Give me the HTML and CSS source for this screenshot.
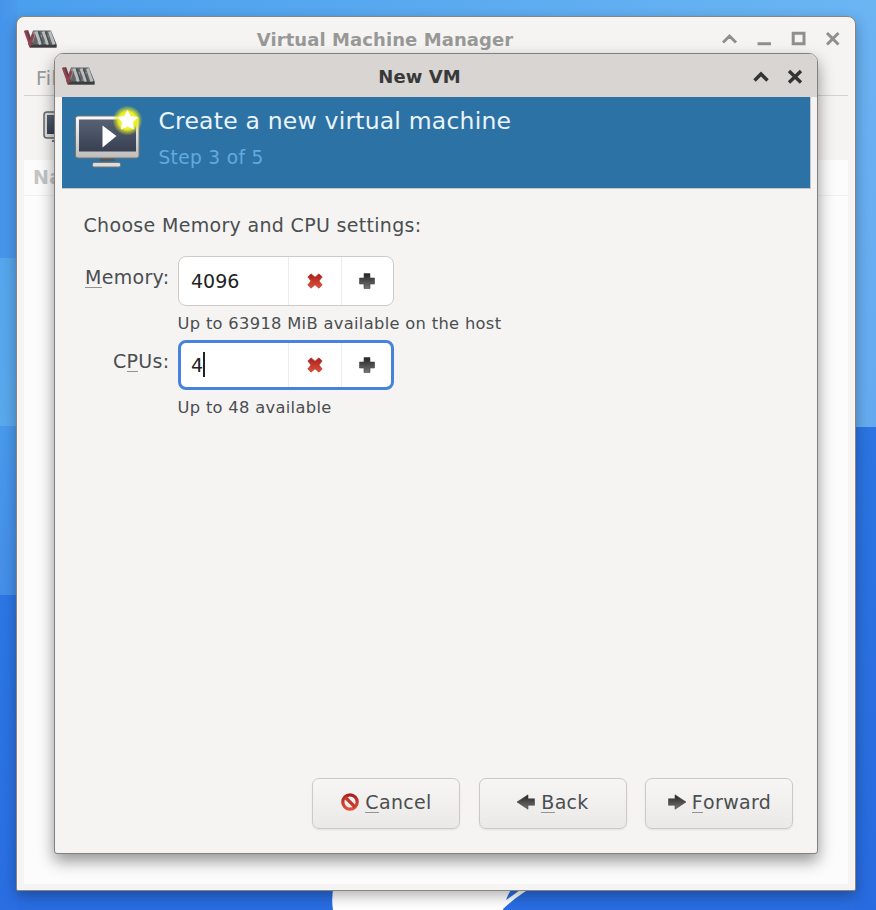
FILE: index.html
```html
<!DOCTYPE html>
<html lang="en">
<head>
<meta charset="utf-8">
<title>Virtual Machine Manager</title>
<link rel="stylesheet" href="styles.css">
</head>
<body>
<svg class="defs" width="0" height="0" aria-hidden="true">
  <defs>
    <linearGradient id="red" x1="0" y1="0" x2="0" y2="1"><stop offset="0" stop-color="#a8201c"/><stop offset="1" stop-color="#e2503a"/></linearGradient>
    <linearGradient id="dark" x1="0" y1="0" x2="0" y2="1"><stop offset="0" stop-color="#222"/><stop offset="1" stop-color="#777"/></linearGradient>
    <linearGradient id="frame" x1="0" y1="0" x2="0" y2="1"><stop offset="0" stop-color="#fafafa"/><stop offset="1" stop-color="#bdbdbb"/></linearGradient>
    <linearGradient id="screen" x1="0" y1="0" x2="0" y2="1"><stop offset="0" stop-color="#566274"/><stop offset="1" stop-color="#384052"/></linearGradient>
    <radialGradient id="glow"><stop offset="0" stop-color="#fdfd70"/><stop offset=".6" stop-color="#e8ee20"/><stop offset="1" stop-color="#d8e020" stop-opacity="0"/></radialGradient>
    <symbol id="logo" viewBox="0 0 34 20">
      <path d="M10 1.500H28L33.500 15V18.500H7L5 15z" fill="#606464"/>
      <path d="M5.500 15.500H33.500V18.500H7z" fill="#3c3e3e"/>
      <g fill="none">
        <path d="M8 15.500 12 2.500M15.500 15 18 6M22.500 15 24.500 6" stroke="#8d9292" stroke-width="2.600"/>
        <path d="M13 2.500 17.500 15.500M20 2.500 25 15.500M26.500 2.500 31 15.500" stroke="#b9bdbd" stroke-width="3"/>
        <path d="M3.500 1.500 8.500 15.500" stroke="#5c3e44" stroke-width="3.400"/>
        <path d="M2 1.500 7 15.500 10.500 5" stroke="#94424f" stroke-width="2.400"/>
        <path d="M15.500 2.500 19.500 15M22.500 2.500 26.500 15" stroke="#4b4f4f" stroke-width="1.400"/>
      </g>
    </symbol>
    <symbol id="cross" viewBox="0 0 16 16"><path d="M4 .8 8 4.200 12 .8 15.200 4 12 8 15.200 12 12 15.200 8 11.800 4 15.200 .8 12 4 8 .8 4z" fill="url(#red)" stroke="#a82a20" stroke-width=".6" stroke-linejoin="round"/></symbol>
    <symbol id="plus" viewBox="0 0 16 16"><path d="M5 .5h6V5h4.500v6H11v4.500H5V11H.5V5H5z" fill="url(#dark)" stroke="#444" stroke-width=".6"/></symbol>
    <symbol id="arrow" viewBox="0 0 20 16"><path d="M1 8 12 .8V4.800H18.500v6.400h-6.500v4z" fill="url(#dark)" stroke="#444" stroke-width=".6"/></symbol>
  </defs>
</svg>
<main class="desktop">
  <svg class="wallpaper" viewBox="0 0 876 910" aria-hidden="true">
    <path d="M334 885H537Q520 893 503 909V910H333Q331 898 334 885" fill="#fff"/>
    <path d="M506 900Q508 894 511 890H520Q512 896 506 900z" fill="#2a6ee0"/>
  </svg>
  <section class="window manager">
    <header class="titlebar">
      <svg class="logo"><use href="#logo"/></svg>
      <h1 class="caption">Virtual Machine Manager</h1>
      <svg class="controls" viewBox="0 0 118 16"><g fill="none" stroke="#8f908e" stroke-width="3"><path d="M1 11.500 7.500 5 14 11.500M35.500 12.800H49M71.200 2.200H82V12.800H71.200zM105 2 116.500 13.500M116.500 2 105 13.500"/></g></svg>
    </header>
    <nav class="menubar">File</nav>
    <div class="toolbar"><svg class="toolicon" viewBox="0 0 40 34"><rect x="1" y="1" width="36" height="26" rx="3" fill="#ddd" stroke="#666" stroke-width="1.500"/><rect x="4" y="4" width="30" height="19" fill="url(#screen)"/><path d="M9 29H29V31H9z" fill="#777"/></svg></div>
    <div class="list"><div class="column">Name</div></div>
  </section>
  <section class="window dialog">
    <header class="titlebar active">
      <svg class="logo"><use href="#logo"/></svg>
      <h2 class="caption">New VM</h2>
      <svg class="controls small" viewBox="0 0 50 16"><g fill="none" stroke="#333" stroke-width="3.400"><path d="M1.500 11.500 8 5 14.500 11.500M36 2 48 13.500M48 2 36 13.500"/></g></svg>
    </header>
    <div class="banner">
      <svg class="machine" viewBox="0 0 70 64">
        <path d="M27 52H40L41 57H26z" fill="#555"/><rect x="18.500" y="58.500" width="28" height="4.500" rx="1.500" fill="#ddd" stroke="#777"/>
        <rect x="1.500" y="12" width="63.500" height="42" rx="2.500" fill="url(#frame)" stroke="#77746e"/>
        <rect x="5" y="15.500" width="57" height="32" fill="url(#screen)"/>
        <path d="M28.500 21.500 42.500 32 28.500 43.500z" fill="#fff"/>
        <circle cx="53.500" cy="16.500" r="15" fill="url(#glow)"/>
        <path d="M53.500 6.500 56.300 12.500 63 13.500 58.500 18.200 59.500 25 53.500 22 47.500 25 48.500 18.200 44 13.500 50.700 12.500z" fill="#fff" stroke="#fff" stroke-linejoin="round"/>
      </svg>
      <div><div class="heading">Create a new virtual machine</div><div class="step">Step 3 of 5</div></div>
    </div>
    <div class="content">
      <p class="intro">Choose Memory and CPU settings:</p>
      <div class="form">
        <label class="name"><u>M</u>emory:</label>
        <div class="spin"><span class="value">4096</span><span class="step-btn"><svg class="sign"><use href="#cross"/></svg></span><span class="step-btn"><svg class="sign"><use href="#plus"/></svg></span></div>
        <p class="hint">Up to 63918 MiB available on the host</p>
        <label class="name">C<u>P</u>Us:</label>
        <div class="spin focused"><span class="value">4<i class="caret"></i></span><span class="step-btn"><svg class="sign"><use href="#cross"/></svg></span><span class="step-btn"><svg class="sign"><use href="#plus"/></svg></span></div>
        <p class="hint">Up to 48 available</p>
      </div>
    </div>
    <footer class="actions">
      <button class="btn"><svg class="ban" viewBox="0 0 20 20"><g fill="none"><circle cx="10" cy="10" r="7.200" stroke="url(#red)" stroke-width="3.200"/><path d="M5 5 15 15" stroke="#c23a2e" stroke-width="3.200"/></g></svg><span><u>C</u>ancel</span></button>
      <button class="btn"><svg class="arrow"><use href="#arrow"/></svg><span><u>B</u>ack</span></button>
      <button class="btn"><svg class="arrow forward"><use href="#arrow"/></svg><span><u>F</u>orward</span></button>
    </footer>
  </section>
</main>
</body>
</html>
```
FILE: styles.css
```css
* { box-sizing: border-box; }
body { margin: 0; font-family: "DejaVu Sans", sans-serif; color: #4a4e50; font-size: 19px; letter-spacing: .32px; }
h1, h2, p { margin: 0; font-size: inherit; font-weight: normal; }
.defs { position: absolute; }
.desktop {
  position: relative; width: 876px; height: 910px; overflow: hidden;
  background:
    linear-gradient(90deg, #4594ec, #4b9bed) 0 0 / 17px 258px no-repeat,
    linear-gradient(#56a6ed, #5aa8ec) 0 258px / 17px 168px no-repeat,
    linear-gradient(#4899ec, #458ee8) 0 426px / 17px 169px no-repeat,
    linear-gradient(#2c76e4, #2a6ee2) 0 595px / 17px 315px no-repeat,
    linear-gradient(#6bb3f3, #65aaf0) 855px 16px / 21px 411px no-repeat,
    linear-gradient(#2c74e2, #286be0) 855px 427px / 21px 483px no-repeat,
    linear-gradient(90deg, #4a9fee, #6bb5f3) 0 0 / 876px 26px no-repeat,
    #296de1;
}
.wallpaper { position: absolute; inset: 0; width: 876px; height: 910px; }
.window { position: absolute; display: flex; flex-direction: column; background: #f5f4f3; }
.manager { left: 16px; top: 16px; width: 840px; height: 875px; border: 1.5px solid #898581; border-radius: 8px 8px 2px 2px; box-shadow: 0 5px 14px rgba(0,0,0,.3); padding: 0 7px 6px; }
.dialog { left: 54px; top: 53px; width: 764px; height: 801px; border: 1.5px solid #82807d; border-radius: 9px 9px 3px 3px; box-shadow: 0 7px 16px rgba(0,0,0,.42); }
.titlebar { display: flex; align-items: center; height: 45px; flex: none; }
.caption { flex: 1; text-align: center; font-size: 18px; letter-spacing: .08px; font-weight: bold; color: #989997; white-space: nowrap; }
.manager .caption { padding: 0 9px 1px 0; }
.logo { width: 34px; height: 20px; }
.controls { width: 118px; height: 16px; margin-right: 8px; }
.manager .logo { margin: 0 0 2px -1px; }
.manager .controls { margin-bottom: 1px; }
.titlebar.active { height: 43px; padding: 2px 14px 0 6px; background: #d9d5d2; border-radius: 7px 7px 0 0; }
.active .logo { margin-bottom: 1px; }
.active .caption { color: #37393a; padding-right: 9px; }
.controls.small { width: 50px; margin: 0; }
.menubar { height: 34px; line-height: 33px; padding-left: 12px; color: #9a9b99; border-bottom: 1px solid #d5d3d1; }
.toolbar { height: 64px; padding: 15px 19px; }
.toolicon { width: 40px; height: 34px; }
.list { flex: 1; background: #fcfcfc; }
.column { height: 36px; line-height: 34px; padding-left: 9px; font-weight: bold; color: #c4c5c4; border-bottom: 1px solid #f1f1f1; }
.banner { display: flex; height: 92px; flex: none; margin: 0 6px 0 7px; padding: 7px 12px; background: #2d72a4; border: 1px solid #c3c7c9; border-width: 0 1px 1px 0; color: #eaf4fb; }
.machine { width: 70px; height: 64px; margin-right: 14.500px; }
.heading { font-size: 23.500px; letter-spacing: .2px; line-height: 34px; white-space: nowrap; }
.step { color: #62aade; font-size: 18.600px; line-height: 39px; }
.content { flex: 1; padding: 25px 28.500px; }
.intro { height: 44px; line-height: 22px; white-space: nowrap; }
.form { display: grid; grid-template-columns: 86px 216px; grid-template-rows: 50px 34px 50px 34px; column-gap: 8px; margin-top: -2px; }
.name { line-height: 43px; text-align: right; white-space: nowrap; }
u { text-decoration: none; border-bottom: 1.5px solid #929392; display: inline-block; line-height: 19px; }
.spin { display: flex; height: 50px; border: 1.5px solid #cfcac5; border-radius: 8px; background: #fff; overflow: hidden; color: #222; }
.focused { border: 3px solid #4682de; }
.value { flex: 1; display: flex; align-items: center; padding: 0 0 1px 12.500px; font-size: 19px; letter-spacing: 0; }
.step-btn { width: 53px; display: grid; place-items: center; border-left: 1px solid #eeecea; }
.step-btn:last-child { width: 52px; }
.focused .value { padding-left: 10.500px; }
.focused .step-btn:last-child { width: 50px; padding-left: 2px; }
.sign { width: 16px; height: 16px; }
.caret { width: 1.5px; height: 25px; background: #222; }
.hint { grid-column: 2; font-size: 16.300px; line-height: 35px; white-space: nowrap; }
.actions { display: flex; justify-content: flex-end; gap: 18.500px; padding: 0 24px 24px; }
.btn { width: 148px; height: 51px; display: flex; align-items: center; justify-content: center; gap: 5px; border: 1.5px solid #cdc9c5; border-radius: 7px; background: linear-gradient(#f7f6f5, #eae9e7); box-shadow: 0 1px 2px rgba(0,0,0,.08); font: inherit; letter-spacing: .32px; color: inherit; padding: 0 0 3px; }
.ban { width: 20px; height: 20px; }
.arrow { width: 20px; height: 16px; }
.forward { transform: scaleX(-1); }
```
